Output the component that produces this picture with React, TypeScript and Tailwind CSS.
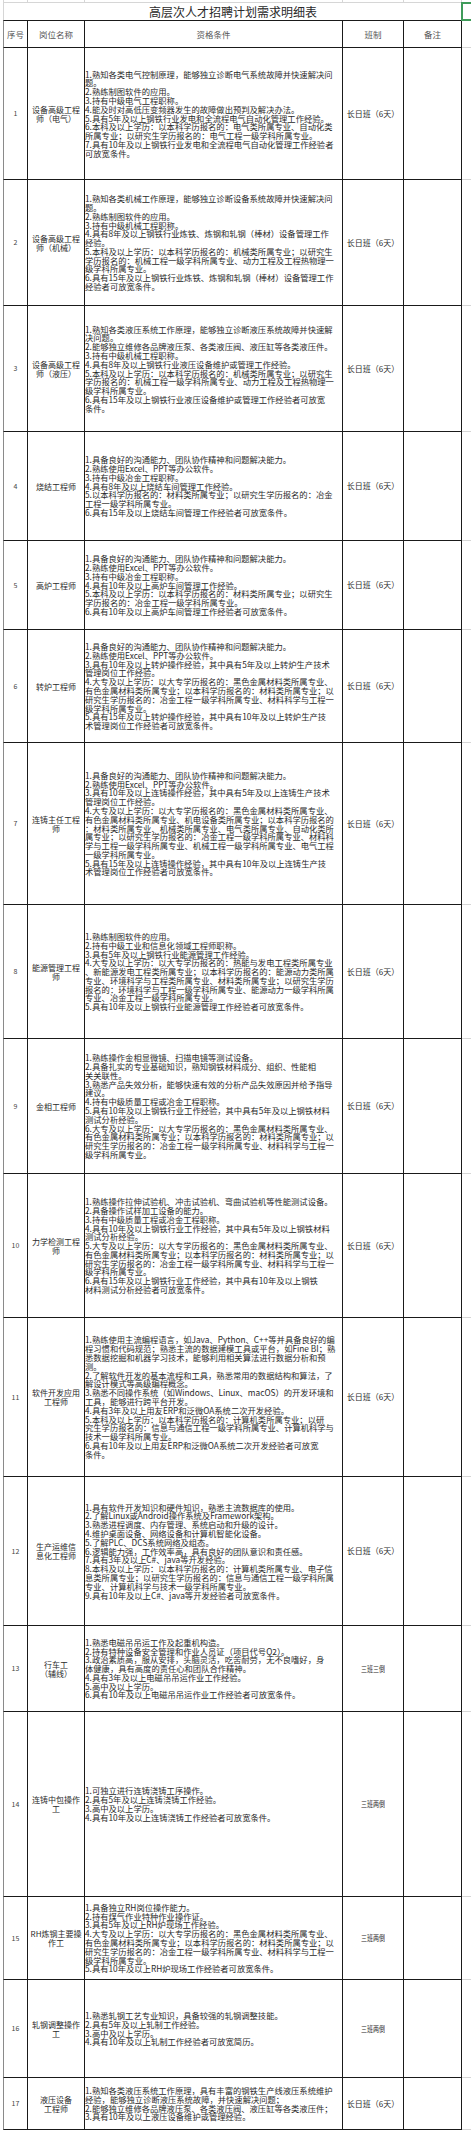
type Row = {
  no: number;
  name: string[];
  lines: string[];
  shift: string;
  h: string;
};

const rows: Row[] = [
  {
    no: 1,
    name: ['设备高级工程', '师（电气）'],
    h: 'h-[132px]',
    shift: '长日班（6天）',
    lines: [
      '1.熟知各类电气控制原理，能够独立诊断电气系统故障并快速解决问',
      '题。',
      '2.熟练制图软件的应用。',
      '3.持有中级电气工程职称。',
      '4.能及时对高低压变频器发生的故障做出预判及解决办法。',
      '5.具有5年及以上钢铁行业发电和全流程电气自动化管理工作经验。',
      '6.本科及以上学历：以本科学历报名的：电气类所属专业、自动化类',
      '所属专业；以研究生学历报名的：电气工程一级学科所属专业。',
      '7.具有10年及以上钢铁行业发电和全流程电气自动化管理工作经验者',
      '可放宽条件。',
    ],
  },
  {
    no: 2,
    name: ['设备高级工程', '师（机械）'],
    h: 'h-[126px]',
    shift: '长日班（6天）',
    lines: [
      '1.熟知各类机械工作原理，能够独立诊断设备系统故障并快速解决问',
      '题。',
      '2.熟练制图软件的应用。',
      '3.持有中级机械工程职称。',
      '4.具有8年及以上钢铁行业炼铁、炼钢和轧钢（棒材）设备管理工作',
      '经验。',
      '5.本科及以上学历：以本科学历报名的：机械类所属专业；以研究生',
      '学历报名的：机械工程一级学科所属专业、动力工程及工程热物理一',
      '级学科所属专业。',
      '6.具有15年及以上钢铁行业炼铁、炼钢和轧钢（棒材）设备管理工作',
      '经验者可放宽条件。',
    ],
  },
  {
    no: 3,
    name: ['设备高级工程', '师（液压）'],
    h: 'h-[126px]',
    shift: '长日班（6天）',
    lines: [
      '1.熟知各类液压系统工作原理，能够独立诊断液压系统故障并快速解',
      '决问题。',
      '2.能够独立维修各品牌液压泵、各类液压阀、液压缸等各类液压件。',
      '3.持有中级机械工程职称。',
      '4.具有8年及以上钢铁行业液压设备维护或管理工作经验。',
      '5.本科及以上学历：以本科学历报名的：机械类所属专业；以研究生',
      '学历报名的：机械工程一级学科所属专业、动力工程及工程热物理一',
      '级学科所属专业。',
      '6.具有15年及以上钢铁行业液压设备维护或管理工作经验者可放宽',
      '条件。',
    ],
  },
  {
    no: 4,
    name: ['烧结工程师'],
    h: 'h-[109px]',
    shift: '长日班（6天）',
    lines: [
      '1.具备良好的沟通能力、团队协作精神和问题解决能力。',
      '2.熟练使用Excel、PPT等办公软件。',
      '3.持有中级冶金工程职称。',
      '4.具有8年及以上烧结车间管理工作经验。',
      '5.以本科学历报名的：材料类所属专业；以研究生学历报名的：冶金',
      '工程一级学科所属专业。',
      '6.具有15年及以上烧结车间管理工作经验者可放宽条件。',
    ],
  },
  {
    no: 5,
    name: ['高炉工程师'],
    h: 'h-[89px]',
    shift: '长日班（6天）',
    lines: [
      '1.具备良好的沟通能力、团队协作精神和问题解决能力。',
      '2.熟练使用Excel、PPT等办公软件。',
      '3.持有中级冶金工程职称。',
      '4.具有10年及以上高炉车间管理工作经验。',
      '5.本科及以上学历：以本科学历报名的：材料类所属专业；以研究生',
      '学历报名的：冶金工程一级学科所属专业。',
      '6.具有10年及以上高炉车间管理工作经验者可放宽条件。',
    ],
  },
  {
    no: 6,
    name: ['转炉工程师'],
    h: 'h-[113px]',
    shift: '长日班（6天）',
    lines: [
      '1.具备良好的沟通能力、团队协作精神和问题解决能力。',
      '2.熟练使用Excel、PPT等办公软件。',
      '3.具有10年及以上转炉操作经验，其中具有5年及以上转炉生产技术',
      '管理岗位工作经验。',
      '4.大专及以上学历：以大专学历报名的：黑色金属材料类所属专业、',
      '有色金属材料类所属专业；以本科学历报名的：材料类所属专业；以',
      '研究生学历报名的：冶金工程一级学科所属专业、材料科学与工程一',
      '级学科所属专业。',
      '5.具有15年及以上转炉操作经验，其中具有10年及以上转炉生产技',
      '术管理岗位工作经验者可放宽条件。',
    ],
  },
  {
    no: 7,
    name: ['连铸主任工程', '师'],
    h: 'h-[162px]',
    shift: '长日班（6天）',
    lines: [
      '1.具备良好的沟通能力、团队协作精神和问题解决能力。',
      '2.熟练使用Excel、PPT等办公软件。',
      '3.具有10年及以上连铸操作经验，其中具有5年及以上连铸生产技术',
      '管理岗位工作经验。',
      '4.大专及以上学历：以大专学历报名的：黑色金属材料类所属专业、',
      '有色金属材料类所属专业、机电设备类所属专业；以本科学历报名的',
      '：材料类所属专业、机械类所属专业、电气类所属专业、自动化类所',
      '属专业；以研究生学历报名的：冶金工程一级学科所属专业、材料科',
      '学与工程一级学科所属专业、机械工程一级学科所属专业、电气工程',
      '一级学科所属专业。',
      '5.具有15年及以上连铸操作经验，其中具有10年及以上连铸生产技',
      '术管理岗位工作经验者可放宽条件。',
    ],
  },
  {
    no: 8,
    name: ['能源管理工程', '师'],
    h: 'h-[134px]',
    shift: '长日班（6天）',
    lines: [
      '1.熟练制图软件的应用。',
      '2.持有中级工业和信息化领域工程师职称。',
      '3.具有5年及以上钢铁行业能源管理工作经验。',
      '4.大专及以上学历：以大专学历报名的：热能与发电工程类所属专业',
      '、新能源发电工程类所属专业；以本科学历报名的：能源动力类所属',
      '专业、环境科学与工程类所属专业、材料类所属专业；以研究生学历',
      '报名的：环境科学与工程一级学科所属专业、能源动力一级学科所属',
      '专业、冶金工程一级学科所属专业。',
      '5.具有10年及以上钢铁行业能源管理工作经验者可放宽条件。',
    ],
  },
  {
    no: 9,
    name: ['金相工程师'],
    h: 'h-[135px]',
    shift: '长日班（6天）',
    lines: [
      '1.熟练操作金相显微镜、扫描电镜等测试设备。',
      '2.具备扎实的专业基础知识，熟知钢铁材料成分、组织、性能相',
      '关关联性。',
      '3.熟悉产品失效分析，能够快速有效的分析产品失效原因并给予指导',
      '建议。',
      '4.持有中级质量工程或冶金工程职称。',
      '5.具有10年及以上钢铁行业工作经验，其中具有5年及以上钢铁材料',
      '测试分析经验。',
      '6.大专及以上学历：以大专学历报名的：黑色金属材料类所属专业、',
      '有色金属材料类所属专业；以本科学历报名的：材料类所属专业；以',
      '研究生学历报名的：冶金工程一级学科所属专业、材料科学与工程一',
      '级学科所属专业。',
    ],
  },
  {
    no: 10,
    name: ['力学检测工程', '师'],
    h: 'h-[144px]',
    shift: '长日班（6天）',
    lines: [
      '1.熟练操作拉伸试验机、冲击试验机、弯曲试验机等性能测试设备。',
      '2.具备操作试样加工设备的能力。',
      '3.持有中级质量工程或冶金工程职称。',
      '4.具有10年及以上钢铁行业工作经验，其中具有5年及以上钢铁材料',
      '测试分析经验。',
      '5.大专及以上学历：以大专学历报名的：黑色金属材料类所属专业、',
      '有色金属材料类所属专业；以本科学历报名的：材料类所属专业；以',
      '研究生学历报名的：冶金工程一级学科所属专业、材料科学与工程一',
      '级学科所属专业。',
      '6.具有15年及以上钢铁行业工作经验，其中具有10年及以上钢铁',
      '材料测试分析经验者可放宽条件。',
    ],
  },
  {
    no: 11,
    name: ['软件开发应用', '工程师'],
    h: 'h-[159px]',
    shift: '长日班（6天）',
    lines: [
      '1.熟练使用主流编程语言，如Java、Python、C++等并具备良好的编',
      '程习惯和代码规范；熟悉主流的数据建模工具或平台，如Fine BI；熟',
      '悉数据挖掘和机器学习技术，能够利用相关算法进行数据分析和预',
      '测。',
      '2.了解软件开发的基本流程和工具，熟悉常用的数据结构和算法，了',
      '解设计模式等高级编程概念。',
      '3.熟悉不同操作系统（如Windows、Linux、macOS）的开发环境和',
      '工具，能够进行跨平台开发。',
      '4.具有3年及以上用友ERP和泛微OA系统二次开发经验。',
      '5.本科及以上学历：以本科学历报名的：计算机类所属专业；以研',
      '究生学历报名的：信息与通信工程一级学科所属专业、计算机科学与',
      '技术一级学科所属专业。',
      '6.具有10年及以上用友ERP和泛微OA系统二次开发经验者可放宽',
      '条件。',
    ],
  },
  {
    no: 12,
    name: ['生产运维信', '息化工程师'],
    h: 'h-[149px]',
    shift: '长日班（6天）',
    lines: [
      '1.具有软件开发知识和硬件知识，熟悉主流数据库的使用。',
      '2.了解Linux或Android操作系统及Framework架构。',
      '3.熟悉进程调度、内存管理、系统启动和升级的设计。',
      '4.维护桌面设备、网络设备和计算机智能化设备。',
      '5.了解PLC、DCS系统网络及组态。',
      '6.逻辑能力强，工作效率高，具有良好的团队意识和责任感。',
      '7.具有3年及以上C#、java等开发经验。',
      '8.本科及以上学历：以本科学历报名的：计算机类所属专业、电子信',
      '息类所属专业；以研究生学历报名的：信息与通信工程一级学科所属',
      '专业、计算机科学与技术一级学科所属专业。',
      '9.具有10年及以上C#、java等开发经验者可放宽条件。',
    ],
  },
  {
    no: 13,
    name: ['行车工', '（辅线）'],
    h: 'h-[86px]',
    shift: '三班三倒',
    lines: [
      '1.熟悉电磁吊吊运工作及起重机构造。',
      '2.持有特种设备安全管理和作业人员证（项目代号Q2）。',
      '3.政治素质高，服从安排，头脑灵活，吃苦耐劳，无不良嗜好，身',
      '体健康，具有高度的责任心和团队合作精神。',
      '4.具有3年及以上电磁吊吊运作业工作经验。',
      '5.高中及以上学历。',
      '6.具有10年及以上电磁吊吊运作业工作经验者可放宽条件。',
    ],
  },
  {
    no: 14,
    name: ['连铸中包操作', '工'],
    h: 'h-[185px]',
    shift: '三班两倒',
    lines: [
      '1.可独立进行连铸浇铸工序操作。',
      '2.具有5年及以上连铸浇铸工作经验。',
      '3.高中及以上学历。',
      '4.具有10年及以上连铸浇铸工作经验者可放宽条件。',
    ],
  },
  {
    no: 15,
    name: ['RH炼钢主要操', '作工'],
    h: 'h-[83px]',
    shift: '三班两倒',
    lines: [
      '1.具备独立RH岗位操作能力。',
      '2.持有煤气作业特种作业操作证。',
      '3.具有5年及以上RH炉现场工作经验。',
      '4.大专及以上学历：以大专学历报名的：黑色金属材料类所属专业、',
      '有色金属材料类所属专业；以本科学历报名的：材料类所属专业；以',
      '研究生学历报名的：冶金工程一级学科所属专业、材料科学与工程一',
      '级学科所属专业。',
      '5.具有10年及以上RH炉现场工作经验者可放宽条件。',
    ],
  },
  {
    no: 16,
    name: ['轧钢调整操作', '工'],
    h: 'h-[98px]',
    shift: '三班两倒',
    lines: [
      '1.熟悉轧钢工艺专业知识，具备较强的轧钢调整技能。',
      '2.具有5年及以上轧制工作经验。',
      '3.高中及以上学历。',
      '4.具有10年及以上轧制工作经验者可放宽简历。',
    ],
  },
  {
    no: 17,
    name: ['液压设备', '工程师'],
    h: 'h-[52px]',
    shift: '长日班（6天）',
    lines: [
      '1.熟知各类液压系统工作原理，具有丰富的钢铁生产线液压系统维护',
      '经验，能够独立诊断液压系统故障，并快速解决问题；',
      '2.能够独立维修各品牌液压泵、各类液压阀、液压缸等各类液压件；',
      '3.具有10年及以上液压设备维护或管理经验。',
    ],
  },
];

function DataRow({ row }: { row: Row }) {
  const isLong = row.shift.startsWith('长日班');
  return (
    <div className={`flex ${row.h}`}>
      <div className="w-[3px] shrink-0" />
      {/* 序号 */}
      <div className="w-[25px] shrink-0 flex items-center justify-center border-l border-r border-b border-l-[#8a8a8a] border-r-[#1a1a1a] border-b-[#1a1a1a] text-[7px] text-[#444]">
        {row.no}
      </div>
      {/* 岗位名称 */}
      <div className="w-[57px] shrink-0 flex flex-col items-center justify-center border-r border-b border-[#1a1a1a] text-[8px] leading-[9px] text-[#2a2a2a]">
        {row.name.map((n, i) => (
          <div key={i} className="whitespace-nowrap">{n}</div>
        ))}
      </div>
      {/* 资格条件 */}
      <div className="w-[258px] shrink-0 flex flex-col justify-center border-r border-b border-[#1a1a1a] text-[8.3px] leading-[8.8px] text-[#2a2a2a]">
        {row.lines.map((l, i) => (
          <div key={i} className="whitespace-nowrap">{l}</div>
        ))}
      </div>
      {/* 班制 */}
      <div className="w-[61px] shrink-0 flex items-center justify-center border-r border-b border-[#1a1a1a] text-[8px] text-[#2a2a2a]">
        {isLong ? (
          <span className="whitespace-nowrap">{row.shift}</span>
        ) : (
          <span className="inline-block whitespace-nowrap scale-x-[0.75]">{row.shift}</span>
        )}
      </div>
      {/* 备注 */}
      <div className="w-[58px] shrink-0 border-r border-b border-[#1a1a1a]" />
      <div className="w-[9px] shrink-0 border-b border-[#d6d6d6]" />
    </div>
  );
}

export default function App() {
  return (
    <div className="relative w-[471px] h-[2130px] overflow-hidden bg-white font-['Noto_Sans_CJK_SC','Noto_Sans',sans-serif] text-[#333]">
      {/* row above the title, only gridlines visible */}
      <div className="flex h-[2px]">
        <div className="w-[3px] shrink-0" />
        <div className="w-[25px] shrink-0 border-l border-r border-[#d6d6d6]" />
        <div className="w-[57px] shrink-0 border-r border-[#d6d6d6]" />
        <div className="w-[258px] shrink-0 border-r border-[#d6d6d6]" />
        <div className="w-[61px] shrink-0 border-r border-[#d6d6d6]" />
        <div className="w-[58px] shrink-0 border-r border-[#d6d6d6]" />
      </div>

      {/* title */}
      <div className="flex h-[18px]">
        <div className="w-[3px] shrink-0" />
        <div className="w-[459px] shrink-0 flex items-center justify-center border-t border-l border-[#d6d6d6] text-[12px] leading-none text-[#2a2a2a]">
          高层次人才招聘计划需求明细表
        </div>
        <div className="w-[9px] shrink-0 border-t border-[#d6d6d6]" />
      </div>

      {/* header */}
      <div className="flex h-[28px] text-[8.5px] text-[#555]">
        <div className="w-[3px] shrink-0" />
        <div className="w-[25px] shrink-0 flex items-center justify-center border border-l-[#8a8a8a] border-t-[#1a1a1a] border-r-[#1a1a1a] border-b-[#1a1a1a]">
          序号
        </div>
        <div className="w-[57px] shrink-0 flex items-center justify-center border-t border-r border-b border-[#1a1a1a]">
          岗位名称
        </div>
        <div className="w-[258px] shrink-0 flex items-center justify-center border-t border-r border-b border-[#1a1a1a]">
          资格条件
        </div>
        <div className="w-[61px] shrink-0 flex items-center justify-center border-t border-r border-b border-[#1a1a1a]">
          班制
        </div>
        <div className="w-[58px] shrink-0 flex items-center justify-center border-t border-r border-b border-[#1a1a1a]">
          备注
        </div>
        <div className="w-[9px] shrink-0 border-t border-b border-[#d6d6d6]" />
      </div>

      {rows.map((r) => (
        <DataRow key={r.no} row={r} />
      ))}

      {/* selected cell marker */}
      <div className="absolute left-[461px] top-[2px] w-[14px] h-[19px] border-2 border-[#3f9b5a]" />
    </div>
  );
}
